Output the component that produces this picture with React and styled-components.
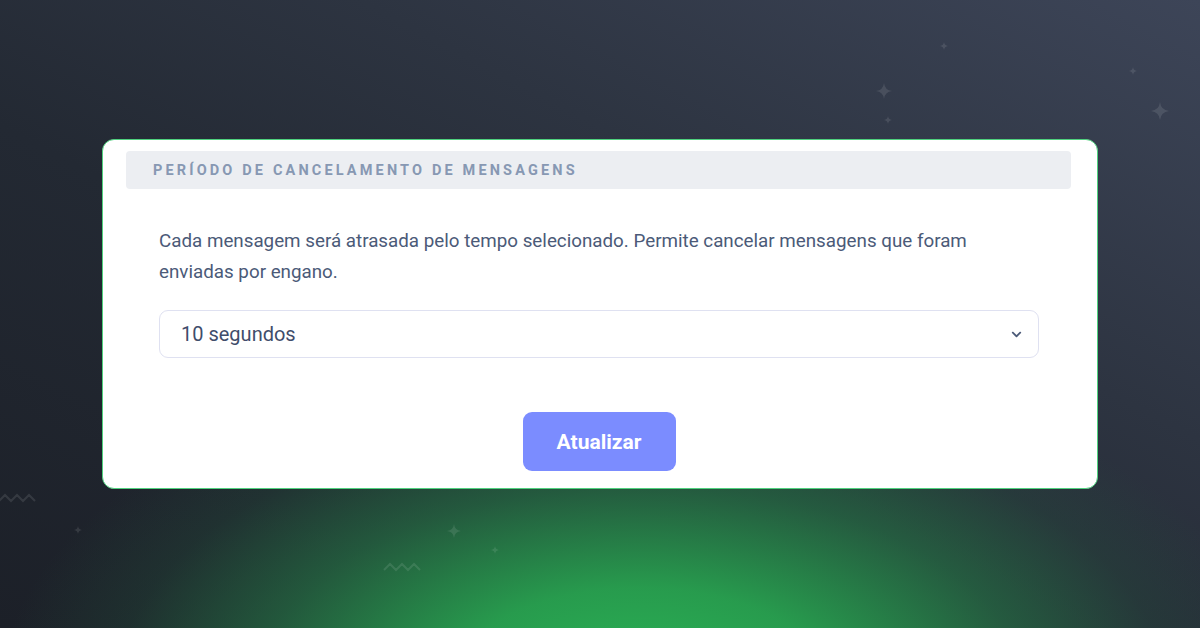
import React from "react";
import styled, { createGlobalStyle } from "styled-components";
import { FaChevronDown } from "react-icons/fa";

const GlobalStyle = createGlobalStyle`
  html, body, #root { margin: 0; padding: 0; height: 100%; }
  body { font-family: Roboto, "Noto Sans", Arial, sans-serif; }
`;

const Page = styled.div`
  position: relative;
  width: 1200px;
  height: 628px;
  overflow: hidden;
  display: flex;
  align-items: center;
  justify-content: center;
  background:
    radial-gradient(ellipse 640px 340px at 640px 690px, rgba(42, 182, 86, 1) 0%, rgba(40, 165, 80, 0.92) 30%, rgba(37, 120, 70, 0.62) 60%, rgba(35, 90, 62, 0.25) 82%, rgba(34, 80, 60, 0) 100%),
    linear-gradient(to top right, #1c2028 0%, #232933 40%, #2d3441 65%, #3d4558 100%);
`;

// decorations scattered on the backdrop
const Deco = styled.svg`
  position: absolute;
  left: ${(p) => p.$x}px;
  top: ${(p) => p.$y}px;
  opacity: ${(p) => p.$o || 0.1};
`;

const Sparkle = ({ x, y, s = 10, o }) => (
  <Deco $x={x - s / 2} $y={y - s / 2} $o={o} width={s} height={s} viewBox="0 0 20 20">
    <path d="M10 0 Q11 9 20 10 Q11 11 10 20 Q9 11 0 10 Q9 9 10 0Z" fill="#ffffff" />
  </Deco>
);

const Wave = ({ x, y, o }) => (
  <Deco $x={x} $y={y} $o={o} width="42" height="10" viewBox="0 0 42 10">
    <path d="M1 8 L7 2 L13 8 L19 2 L25 8 L31 2 L37 8" fill="none" stroke="#ffffff" strokeWidth="2" />
  </Deco>
);

const Card = styled.section`
  width: 996px;
  box-sizing: border-box;
  background: #ffffff;
  border: 1.5px solid #4fd17e;
  border-radius: 12px;
  padding: 11px 26px 17px 23px;
  display: flex;
  flex-direction: column;
`;

const Header = styled.div`
  height: 38px;
  background: #eceef2;
  border-radius: 4px;
  display: flex;
  align-items: center;
  padding-left: 27px;
  font-size: 14.5px;
  font-weight: 700;
  letter-spacing: 3.15px;
  color: #8798b3;
`;

const Body = styled.div`
  padding: 37px 32px 0 33px;
  display: flex;
  flex-direction: column;
`;

const Text = styled.p`
  margin: 0;
  font-size: 18.8px;
  line-height: 31px;
  color: #4b5a78;
`;

const SelectBox = styled.div`
  margin-top: 22px;
  height: 48px;
  box-sizing: border-box;
  border: 1.5px solid #dfe1f1;
  border-radius: 9px;
  display: flex;
  align-items: center;
  justify-content: space-between;
  padding: 0 16px 0 21px;
  font-size: 20px;
  color: #3f4d6b;
  svg { color: #4b5a78; width: 11px; height: 11px; }
`;

const Actions = styled.div`
  display: flex;
  justify-content: center;
  margin-top: 54px;
`;

const Button = styled.button`
  width: 153px;
  height: 59px;
  border: none;
  border-radius: 9px;
  background: #7b8cff;
  color: #ffffff;
  font-family: Roboto, Arial, sans-serif;
  font-size: 21px;
  font-weight: 700;
  cursor: pointer;
`;

export default function App() {
  return (
    <>
      <GlobalStyle />
      <Page>
        <Sparkle x={884} y={91} s={16} />
        <Sparkle x={888} y={120} s={8} />
        <Sparkle x={944} y={46} s={8} />
        <Sparkle x={1133} y={71} s={8} />
        <Sparkle x={1160} y={111} s={18} />
        <Sparkle x={78} y={530} s={8} />
        <Sparkle x={454} y={531} s={14} />
        <Sparkle x={495} y={550} s={8} />
        <Wave x={-2} y={493} />
        <Wave x={383} y={562} />
        <Card>
          <Header>PERÍODO DE CANCELAMENTO DE MENSAGENS</Header>
          <Body>
            <Text>
              Cada mensagem será atrasada pelo tempo selecionado. Permite cancelar mensagens que foram enviadas por engano.
            </Text>
            <SelectBox>
              <span>10 segundos</span>
              <FaChevronDown />
            </SelectBox>
            <Actions>
              <Button>Atualizar</Button>
            </Actions>
          </Body>
        </Card>
      </Page>
    </>
  );
}
